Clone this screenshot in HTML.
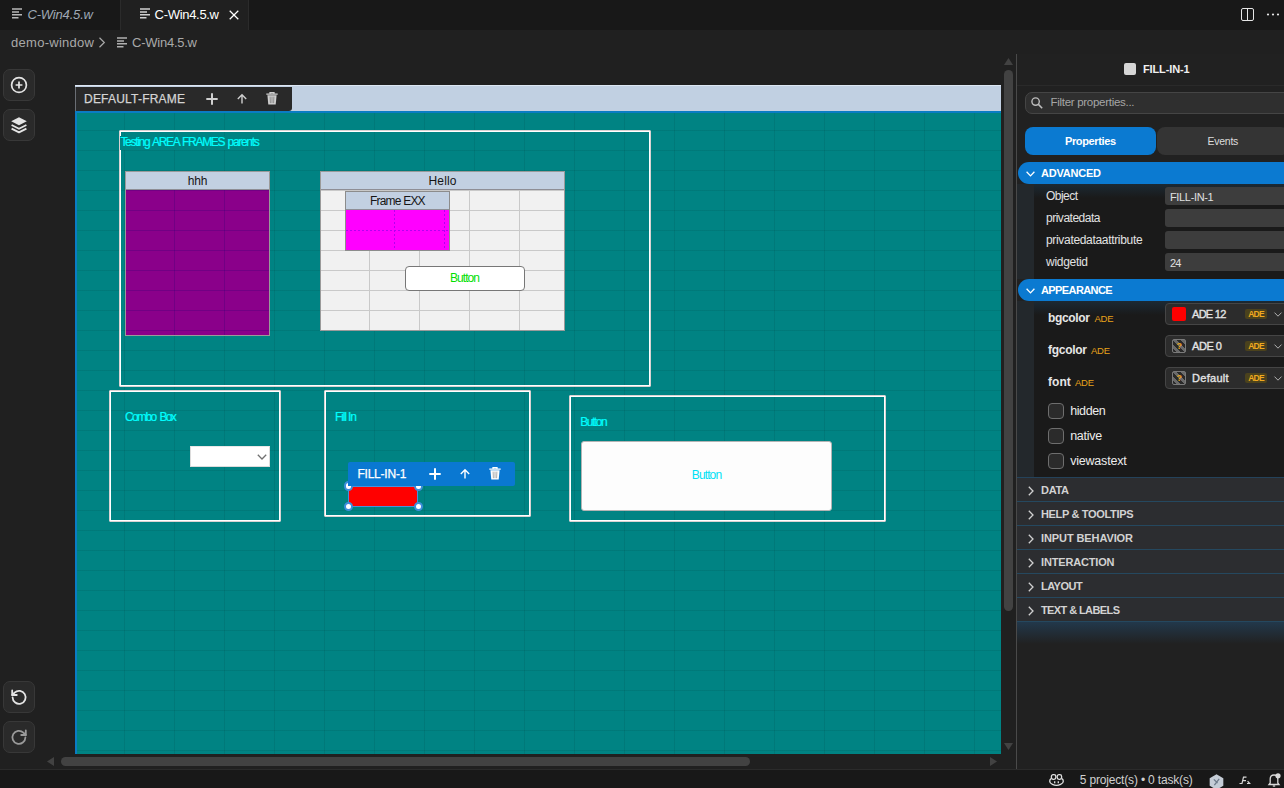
<!DOCTYPE html>
<html lang="en">
<head>
<meta charset="utf-8">
<title>C-Win4.5.w</title>
<style>
*{box-sizing:border-box;margin:0;padding:0}
html,body{width:1284px;height:788px;overflow:hidden;background:#202020;font-family:"Liberation Sans",sans-serif;color:#ccc;font-size:13px}
body{position:relative}
.a{position:absolute}
.t{position:absolute;white-space:nowrap;line-height:1}
svg{position:absolute;overflow:visible}
#tabbar{left:0;top:0;width:1284px;height:30px;background:#181818}
#tab2{left:121px;top:0;width:127px;height:30px;background:#202020}
#status{left:0;top:769px;width:1284px;height:19px;background:#181818;border-top:1px solid #2b2b2b}
.tbtn{left:3px;width:32px;height:32px;border-radius:7px;background:#2a2a2a;border:1px solid #383838}
#canvas{left:75px;top:85px;width:926px;height:669px;background:#c1d0e2;border-top:1px solid #dde7f3;overflow:hidden}
#teal{left:0;top:25px;width:926px;height:644px;background-color:#008383;border-top:1px solid #0b70bd;border-left:1px solid #0b70bd}
.grid{background-image:linear-gradient(to right,var(--g) 1px,transparent 1px),linear-gradient(to bottom,var(--g) 1px,transparent 1px);background-size:50px 20px}
.box{border:1px solid #d9d2d2;box-shadow:inset 0 0 0 1px #ffffff;border-radius:1px}
.lab{height:23px;background:#292929;border-radius:0 0 3px 0}
.wt{font-size:12px;color:#00ffff;-webkit-text-stroke:0.2px #00ffff}
.frm{border:1px solid #9a9a9a}
.ttl{left:0;top:0;right:0;height:18px;background:#c2d0e2;border-bottom:1px solid #8e8e96}
.dk{color:#151515;font-size:12px}
#vsb{left:1001px;top:55px;width:16px;height:714px}
#panel{left:1016px;top:54px;width:268px;height:715px;background:#212121;border-left:1px solid #4a4a4a}
.sec{left:2px;width:270px;height:22px;background:#0b7ad1;border-radius:11px 0 0 11px}
.csec{left:1px;width:270px;height:25px;background:#2c2d30;border-bottom:1px solid #25485f}
.cont{left:18px;width:250px;background:#1a1a1a}
.strip{left:1px;width:17px;background:#23282c}
.pin{left:149px;width:130px;height:18px;background:#3d3d3d;border-radius:3px}
.sel{left:149px;width:130px;height:22px;background:#2c2c2c;border:1px solid #454545;border-radius:4px}
.cb{left:32px;width:16px;height:16px;border:1px solid #6e6e6e;border-radius:4px;background:#2b2b2b}
.b{font-weight:bold}
.badge{width:22px;height:10px;background:#4b421d;border-radius:2px}
.sw{width:14px;height:14px;border-radius:2px}
.swq{border:1px solid #7a7a7a;background:repeating-linear-gradient(45deg,#2a2a2a 0 2.8px,#6a6a6a 2.8px 5.6px)}
</style>
</head>
<body>
<div class="a" id="tabbar"></div>
<div class="a" id="tab2"></div>
<div class="a" style="left:120px;top:0;width:1px;height:30px;background:#2b2b2b"></div>
<div class="a" style="left:248px;top:0;width:1px;height:30px;background:#2b2b2b"></div>
<svg style="left:12px;top:8px" width="11" height="11" viewBox="0 0 11 11"><path d="M0 1h10M0 3.9h7M0 6.8h10M0 9.7h6.5" stroke="#b8b8b8" stroke-width="1.5" fill="none"/></svg>
<span id="tab1" class="t " style="left:27.5px;top:8px;letter-spacing:-0.175px;font-size:13px;font-style:italic;color:#9fa8b5">C-Win4.5.w</span>
<svg style="left:140px;top:8px" width="11" height="11" viewBox="0 0 11 11"><path d="M0 1h10M0 3.9h7M0 6.8h10M0 9.7h6.5" stroke="#d0d0d0" stroke-width="1.5" fill="none"/></svg>
<span id="tab2t" class="t " style="left:154.6px;top:8px;letter-spacing:-0.309px;font-size:13px;color:#ffffff">C-Win4.5.w</span>
<svg style="left:229px;top:9.5px" width="10" height="10" viewBox="0 0 10 10"><path d="M0.7 0.7L9.3 9.3M9.3 0.7L0.7 9.3" stroke="#fff" stroke-width="1.25" fill="none"/></svg>
<svg style="left:1241px;top:8px" width="13" height="13" viewBox="0 0 13 13"><rect x="0.5" y="0.5" width="12" height="12" rx="1.5" fill="none" stroke="#e6e6e6" stroke-width="1"/><path d="M6.5 0.5V12.5" stroke="#e6e6e6" stroke-width="1"/></svg>
<svg style="left:1266px;top:13px" width="14" height="3" viewBox="0 0 14 3"><circle cx="2" cy="1.5" r="1.1" fill="#e6e6e6"/><circle cx="7" cy="1.5" r="1.1" fill="#e6e6e6"/><circle cx="12" cy="1.5" r="1.1" fill="#e6e6e6"/></svg>
<span id="cr1" class="t " style="left:11px;top:36px;letter-spacing:0.279px;font-size:13px;color:#a9a9a9">demo-window</span>
<svg style="left:98px;top:37px" width="8" height="11" viewBox="0 0 8 11"><path d="M1.5 0.8L6.3 5.5L1.5 10.2" stroke="#a9a9a9" stroke-width="1.2" fill="none"/></svg>
<svg style="left:117px;top:37px" width="11" height="11" viewBox="0 0 11 11"><path d="M0 1h10M0 3.9h7M0 6.8h10M0 9.7h6.5" stroke="#b0b0b0" stroke-width="1.5" fill="none"/></svg>
<span id="cr2" class="t " style="left:132px;top:36px;letter-spacing:-0.242px;font-size:13px;color:#a9a9a9">C-Win4.5.w</span>
<div class="a tbtn" style="top:69px"></div>
<div class="a tbtn" style="top:109px"></div>
<div class="a tbtn" style="top:681px"></div>
<div class="a tbtn" style="top:721px"></div>
<svg style="left:10px;top:76px" width="18" height="18" viewBox="0 0 18 18"><circle cx="9" cy="9" r="7.4" fill="none" stroke="#e4e4e4" stroke-width="1.7"/><path d="M9 5.6V12.4M5.6 9H12.4" stroke="#e4e4e4" stroke-width="1.7"/></svg>
<svg style="left:10px;top:116px" width="18" height="18" viewBox="0 0 18 18"><path d="M9 1.2L16.8 5.2L9 9.2L1.2 5.2Z" fill="#e4e4e4"/><path d="M1.6 9L9 12.8L16.4 9M1.6 12.6L9 16.4L16.4 12.6" fill="none" stroke="#e4e4e4" stroke-width="1.8" stroke-linejoin="round"/></svg>
<svg style="left:10px;top:688px" width="18" height="18" viewBox="0 0 18 18"><path d="M2.6 9.4A6.5 6.5 0 1 0 4.6 4.6L2.2 7" fill="none" stroke="#e4e4e4" stroke-width="1.8" stroke-linecap="round"/><path d="M2.2 2.4V7H6.8" fill="none" stroke="#e4e4e4" stroke-width="1.8" stroke-linecap="round" stroke-linejoin="round"/></svg>
<svg style="left:10px;top:728px" width="18" height="18" viewBox="0 0 18 18"><path d="M15.4 9.4A6.5 6.5 0 1 1 13.4 4.6L15.8 7" fill="none" stroke="#9a9a9a" stroke-width="1.8" stroke-linecap="round"/><path d="M15.8 2.4V7H11.2" fill="none" stroke="#9a9a9a" stroke-width="1.8" stroke-linecap="round" stroke-linejoin="round"/></svg>
<div class="a" id="canvas"></div>
<div class="a" style="left:75px;top:111px;width:926px;height:643px;background:#008383"></div>
<div class="a grid" style="left:75px;top:111px;width:926px;height:643px;--g:rgba(0,40,40,.11);background-position:49px 19px"></div>
<div class="a" style="left:75px;top:111px;width:926px;height:2px;background:#0a7cc4"></div>
<div class="a" style="left:75px;top:111px;width:2px;height:643px;background:#0a7cc4"></div>
<div class="a" style="left:75px;top:87px;width:1px;height:24px;background:#6a6e74"></div>
<div class="a lab" style="left:76px;top:87px;width:216px;height:24px"></div>
<span id="dfl" class="t " style="left:84px;top:92.8px;letter-spacing:0.212px;font-size:12px;color:#d4d4d4;-webkit-text-stroke:0.25px #d4d4d4">DEFAULT-FRAME</span>
<svg style="left:206px;top:93px" width="12" height="12" viewBox="0 0 12 12"><path d="M6 0.3V11.7M0.3 6H11.7" stroke="#cfcfcf" stroke-width="2" fill="none"/></svg><svg style="left:237px;top:94px" width="10" height="10" viewBox="0 0 10 10"><path d="M5 9.6V1M0.8 5L5 0.8L9.2 5" stroke="#cfcfcf" stroke-width="1.4" fill="none"/></svg><svg style="left:265.6px;top:92px" width="12" height="13" viewBox="0 0 12 13"><path d="M0.3 2.2H11.7M4 2V0.6H8V2" stroke="#cfcfcf" stroke-width="1.3" fill="none"/><path d="M1.4 3.2H10.6L9.7 12.6H2.3Z" fill="#cfcfcf"/><path d="M4.1 4.6L4.4 11.2M6 4.6V11.2M7.9 4.6L7.6 11.2" stroke="#00000066" stroke-width="0.8" fill="none"/></svg>
<div class="a box" style="left:119px;top:130px;width:532px;height:257px"></div>
<div class="a" style="left:120px;top:136px;width:141px;height:14px;background:#008383"></div>
<span id="tst" class="t wt" style="left:120.4px;top:135.7px;letter-spacing:-1.300px;word-spacing:1.261px;">Testing AREA FRAMES parents</span>
<div class="a frm" style="left:125px;top:171px;width:145px;height:165px;background:#8a008a"><div class="a ttl"></div><div class="a grid" style="left:0;top:18px;right:0;bottom:0;--g:rgba(20,0,110,.2);background-position:48px 20px"></div></div>
<span id="hhh" class="t dk" style="left:187.75px;top:174.8px;letter-spacing:-0.141px;">hhh</span>
<div class="a frm" style="left:320px;top:171px;width:245px;height:160px;background:#f1f1f1"><div class="a ttl"></div><div class="a grid" style="left:0;top:18px;right:0;bottom:0;--g:#c9c9c9;background-position:48px 20px"></div></div>
<span id="hello" class="t dk" style="left:428.5px;top:174.8px;letter-spacing:0.161px;">Hello</span>
<div class="a frm" style="left:345px;top:191px;width:105px;height:60px;background:#ff00ff;border-color:#8c8c8c"><div class="a ttl"></div><div class="a" style="left:48px;top:18px;width:1px;bottom:0;background:repeating-linear-gradient(to bottom,#b400f0 0 2px,transparent 2px 4px)"></div><div class="a" style="left:98px;top:18px;width:1px;bottom:0;background:repeating-linear-gradient(to bottom,#b400f0 0 2px,transparent 2px 4px)"></div><div class="a" style="left:0;top:38px;right:0;height:1px;background:repeating-linear-gradient(to right,#b400f0 0 2px,transparent 2px 4px)"></div></div>
<span id="fexx" class="t dk" style="left:370px;top:194.6px;letter-spacing:-0.804px;">Frame EXX</span>
<div class="a" style="left:405px;top:266px;width:120px;height:25px;background:#fff;border:1px solid #777;border-radius:4px"></div>
<span id="btng" class="t " style="left:450px;top:271.8px;letter-spacing:-0.942px;font-size:12px;color:#00e000">Button</span>
<div class="a box" style="left:109px;top:390px;width:172px;height:132px"></div>
<span id="cmb" class="t wt" style="left:125px;top:411.3px;letter-spacing:-1.650px;word-spacing:2.297px;">Combo Box</span>
<div class="a" style="left:190px;top:446px;width:80px;height:21px;background:#fff;border:1px solid #dcdcdc;border-top-color:#e8e8e8"></div>
<svg style="left:257px;top:454px" width="10" height="6" viewBox="0 0 10 6"><path d="M0.8 0.8L5 5L9.2 0.8" stroke="#707070" stroke-width="1.3" fill="none"/></svg>
<div class="a box" style="left:324px;top:390px;width:207px;height:127px"></div>
<span id="fil" class="t wt" style="left:335px;top:411.3px;letter-spacing:-1.112px;">Fill In</span>
<div class="a" style="left:348px;top:486px;width:70px;height:21px;border:1px solid #4a90d9;border-radius:3px"></div>
<div class="a" style="left:349px;top:487px;width:68px;height:19px;background:#ff0000;border-radius:3px"></div>
<div class="a" style="left:343.5px;top:481.3px;width:9.4px;height:9.4px;border-radius:50%;background:#fff;border:2px solid #3d8edb"></div>
<div class="a" style="left:413.5px;top:481.3px;width:9.4px;height:9.4px;border-radius:50%;background:#fff;border:2px solid #3d8edb"></div>
<div class="a" style="left:343.5px;top:502.1px;width:9.4px;height:9.4px;border-radius:50%;background:#fff;border:2px solid #3d8edb"></div>
<div class="a" style="left:413.5px;top:502.1px;width:9.4px;height:9.4px;border-radius:50%;background:#fff;border:2px solid #3d8edb"></div>
<div class="a" style="left:348px;top:462px;width:167px;height:24px;background:#0a78d2;border-radius:2px 2px 2px 0"></div>
<span id="fi1" class="t " style="left:357.4px;top:467.8px;letter-spacing:-0.210px;font-size:12px;color:#ffffff;-webkit-text-stroke:0.25px #ffffff">FILL-IN-1</span>
<svg style="left:429px;top:468px" width="12" height="12" viewBox="0 0 12 12"><path d="M6 0.3V11.7M0.3 6H11.7" stroke="#ffffff" stroke-width="2" fill="none"/></svg><svg style="left:460px;top:469px" width="10" height="10" viewBox="0 0 10 10"><path d="M5 9.6V1M0.8 5L5 0.8L9.2 5" stroke="#ffffff" stroke-width="1.4" fill="none"/></svg><svg style="left:488.6px;top:467px" width="12" height="13" viewBox="0 0 12 13"><path d="M0.3 2.2H11.7M4 2V0.6H8V2" stroke="#ffffff" stroke-width="1.3" fill="none"/><path d="M1.4 3.2H10.6L9.7 12.6H2.3Z" fill="#ffffff"/><path d="M4.1 4.6L4.4 11.2M6 4.6V11.2M7.9 4.6L7.6 11.2" stroke="#00000066" stroke-width="0.8" fill="none"/></svg>
<div class="a box" style="left:569px;top:395px;width:317px;height:127px"></div>
<span id="btl" class="t wt" style="left:580.2px;top:416.3px;letter-spacing:-1.442px;">Button</span>
<div class="a" style="left:581px;top:441px;width:251px;height:70px;background:#fdfdfd;border:1px solid #b4b4b4;border-radius:3px"></div>
<span id="btc" class="t " style="left:691.8px;top:468.6px;letter-spacing:-0.880px;font-size:12px;color:#00e1f5">Button</span>
<svg style="left:1004px;top:58px" width="9" height="7" viewBox="0 0 9 7"><path d="M4.5 0L9 7H0Z" fill="#424242"/></svg>
<div class="a" style="left:1004px;top:70px;width:9px;height:541px;border-radius:4.5px;background:#424242"></div>
<svg style="left:1004px;top:743px" width="9" height="7" viewBox="0 0 9 7"><path d="M0 0H9L4.5 7Z" fill="#424242"/></svg>
<svg style="left:47px;top:757px" width="7" height="9" viewBox="0 0 7 9"><path d="M7 0V9L0 4.5Z" fill="#424242"/></svg>
<div class="a" style="left:61px;top:757px;width:689px;height:9px;border-radius:4.5px;background:#424242"></div>
<svg style="left:990px;top:757px" width="7" height="9" viewBox="0 0 7 9"><path d="M0 0V9L7 4.5Z" fill="#424242"/></svg>
<div class="a" id="panel"></div>
<div class="a" style="left:1124px;top:63px;width:12px;height:12px;background:#d6d6d6;border-radius:2px"></div>
<span id="phd" class="t b" style="left:1143px;top:63.7px;letter-spacing:-0.132px;font-size:11px;color:#f0f0f0">FILL-IN-1</span>
<div class="a" style="left:1017px;top:85px;width:267px;height:1px;background:#2a2a2a"></div>
<div class="a" style="left:1025px;top:92px;width:270px;height:22px;background:#2f2f2f;border:1px solid #454545;border-radius:7px"></div>
<svg style="left:1031px;top:97px" width="12" height="12" viewBox="0 0 12 12"><circle cx="4.6" cy="4.6" r="3.7" fill="none" stroke="#bdbdbd" stroke-width="1.4"/><path d="M7.4 7.4L11.2 11.2" stroke="#bdbdbd" stroke-width="1.5"/></svg>
<span id="flt" class="t " style="left:1050.5px;top:97.1px;letter-spacing:-0.289px;font-size:11.5px;color:#a6a6a6">Filter properties...</span>
<div class="a" style="left:1025px;top:127px;width:131px;height:28px;background:#0b7ad1;border-radius:8px"></div>
<span id="tpr" class="t b" style="left:1065px;top:135.7px;letter-spacing:-0.379px;font-size:11px;color:#ffffff">Properties</span>
<div class="a" style="left:1157px;top:127px;width:132px;height:28px;background:#343434;border-radius:8px"></div>
<span id="tev" class="t " style="left:1207.5px;top:135.9px;letter-spacing:-0.263px;font-size:10.5px;color:#dcdcdc">Events</span>
<div class="a strip" style="left:1017px;top:184px;height:95px"></div>
<div class="a cont" style="left:1034px;top:184px;height:95px"></div>
<div class="a" style="left:1034px;top:184px;width:250px;height:14px;background:linear-gradient(to bottom,rgba(30,70,100,.35),rgba(30,70,100,0))"></div>
<div class="a sec" style="left:1018px;top:162px"></div>
<svg style="left:1025.5px;top:170.5px" width="9" height="6" viewBox="0 0 9 6"><path d="M0.6 0.7L4.5 4.9L8.4 0.7" stroke="#ffffff" stroke-width="1.3" fill="none"/></svg>
<span id="adv" class="t b" style="left:1041px;top:167.7px;letter-spacing:-0.219px;font-size:11px;color:#ffffff">ADVANCED</span>
<span id="r1" class="t " style="left:1046px;top:189.8px;letter-spacing:-0.538px;font-size:12px;color:#e2e2e2">Object</span>
<div class="a pin" style="left:1165px;top:187px"></div>
<span id="r2" class="t " style="left:1046px;top:211.8px;letter-spacing:-0.488px;font-size:12px;color:#e2e2e2">privatedata</span>
<div class="a pin" style="left:1165px;top:209px"></div>
<span id="r3" class="t " style="left:1046px;top:233.8px;letter-spacing:-0.323px;font-size:12px;color:#e2e2e2">privatedataattribute</span>
<div class="a pin" style="left:1165px;top:231px"></div>
<span id="r4" class="t " style="left:1046px;top:255.8px;letter-spacing:-0.291px;font-size:12px;color:#e2e2e2">widgetid</span>
<div class="a pin" style="left:1165px;top:253px"></div>
<span id="v1" class="t " style="left:1170px;top:191.7px;letter-spacing:-0.345px;font-size:11px;color:#e0e0e0">FILL-IN-1</span>
<span id="v4" class="t " style="left:1170px;top:257.7px;letter-spacing:-0.750px;font-size:11px;color:#e0e0e0">24</span>
<div class="a strip" style="left:1017px;top:301px;height:176px"></div>
<div class="a cont" style="left:1034px;top:301px;height:176px"></div>
<div class="a" style="left:1034px;top:301px;width:250px;height:14px;background:linear-gradient(to bottom,rgba(30,70,100,.35),rgba(30,70,100,0))"></div>
<div class="a sec" style="left:1018px;top:279px"></div>
<svg style="left:1025.5px;top:287.5px" width="9" height="6" viewBox="0 0 9 6"><path d="M0.6 0.7L4.5 4.9L8.4 0.7" stroke="#ffffff" stroke-width="1.3" fill="none"/></svg>
<span id="app" class="t b" style="left:1041px;top:284.7px;letter-spacing:-0.602px;font-size:11px;color:#ffffff">APPEARANCE</span>
<span id="pl0" class="t b" style="left:1048px;top:311.8px;letter-spacing:-0.334px;font-size:12px;color:#e6e6e6">bgcolor</span>
<span id="pa0" class="t " style="left:1094.5px;top:314px;letter-spacing:-0.274px;font-size:9.5px;color:#e8a21a">ADE</span>
<div class="a sel" style="left:1165px;top:303px"></div>
<div class="a sw" style="left:1172px;top:307px;background:#ff0000"></div>
<span id="pv0" class="t " style="left:1192px;top:308.7px;letter-spacing:-0.704px;font-size:11px;color:#e4e4e4;-webkit-text-stroke:0.35px #e4e4e4">ADE 12</span>
<div class="a badge" style="left:1245px;top:309px"></div>
<span id="pb0" class="t b" style="left:1248.2px;top:310.1px;letter-spacing:-0.775px;font-size:8.5px;color:#f0a91e">ADE</span>
<svg style="left:1274px;top:312px" width="8" height="5" viewBox="0 0 8 5"><path d="M0.5 0.6L4 4.2L7.5 0.6" stroke="#b0b0b0" stroke-width="1" fill="none"/></svg>
<span id="pl1" class="t b" style="left:1048px;top:343.8px;letter-spacing:-0.279px;font-size:12px;color:#e6e6e6">fgcolor</span>
<span id="pa1" class="t " style="left:1091px;top:346px;letter-spacing:-0.274px;font-size:9.5px;color:#e8a21a">ADE</span>
<div class="a sel" style="left:1165px;top:335px"></div>
<div class="a sw swq" style="left:1172px;top:339px"></div>
<span id="q1" class="t b" style="left:1176.5px;top:341.5px;letter-spacing:0.000px;font-size:9px;color:#e8a21a">?</span>
<span id="pv1" class="t " style="left:1192px;top:340.7px;letter-spacing:-0.451px;font-size:11px;color:#e4e4e4;-webkit-text-stroke:0.35px #e4e4e4">ADE 0</span>
<div class="a badge" style="left:1245px;top:341px"></div>
<span id="pb1" class="t b" style="left:1248.2px;top:342.1px;letter-spacing:-0.775px;font-size:8.5px;color:#f0a91e">ADE</span>
<svg style="left:1274px;top:344px" width="8" height="5" viewBox="0 0 8 5"><path d="M0.5 0.6L4 4.2L7.5 0.6" stroke="#b0b0b0" stroke-width="1" fill="none"/></svg>
<span id="pl2" class="t b" style="left:1048px;top:375.8px;letter-spacing:0.032px;font-size:12px;color:#e6e6e6">font</span>
<span id="pa2" class="t " style="left:1075px;top:378px;letter-spacing:-0.274px;font-size:9.5px;color:#e8a21a">ADE</span>
<div class="a sel" style="left:1165px;top:367px"></div>
<div class="a sw swq" style="left:1172px;top:371px"></div>
<span id="q2" class="t b" style="left:1176.5px;top:373.5px;letter-spacing:0.000px;font-size:9px;color:#e8a21a">?</span>
<span id="pv2" class="t " style="left:1192px;top:372.7px;letter-spacing:0.289px;font-size:11px;color:#e4e4e4;-webkit-text-stroke:0.35px #e4e4e4">Default</span>
<div class="a badge" style="left:1245px;top:373px"></div>
<span id="pb2" class="t b" style="left:1248.2px;top:374.1px;letter-spacing:-0.775px;font-size:8.5px;color:#f0a91e">ADE</span>
<svg style="left:1274px;top:376px" width="8" height="5" viewBox="0 0 8 5"><path d="M0.5 0.6L4 4.2L7.5 0.6" stroke="#b0b0b0" stroke-width="1" fill="none"/></svg>
<div class="a cb" style="left:1048px;top:403px"></div>
<span id="ck0" class="t " style="left:1070.2px;top:405.1px;letter-spacing:-0.408px;font-size:12.5px;color:#ececec">hidden</span>
<div class="a cb" style="left:1048px;top:428px"></div>
<span id="ck1" class="t " style="left:1070.2px;top:430.1px;letter-spacing:-0.272px;font-size:12.5px;color:#ececec">native</span>
<div class="a cb" style="left:1048px;top:453px"></div>
<span id="ck2" class="t " style="left:1070.2px;top:455.1px;letter-spacing:-0.206px;font-size:12.5px;color:#ececec">viewastext</span>
<div class="a" style="left:1017px;top:477px;width:267px;height:1px;background:#24425a"></div>
<div class="a csec" style="left:1017px;top:478px;height:24px"></div>
<svg style="left:1027.5px;top:485.5px" width="6" height="10" viewBox="0 0 6 10"><path d="M0.8 0.7L5 5L0.8 9.3" stroke="#d0d0d0" stroke-width="1.3" fill="none"/></svg>
<span id="cs0" class="t b" style="left:1041px;top:484.7px;letter-spacing:-0.306px;font-size:11px;color:#d2d2d2">DATA</span>
<div class="a csec" style="left:1017px;top:502px;height:24px"></div>
<svg style="left:1027.5px;top:509.5px" width="6" height="10" viewBox="0 0 6 10"><path d="M0.8 0.7L5 5L0.8 9.3" stroke="#d0d0d0" stroke-width="1.3" fill="none"/></svg>
<span id="cs1" class="t b" style="left:1041px;top:508.7px;letter-spacing:-0.334px;font-size:11px;color:#d2d2d2">HELP &amp; TOOLTIPS</span>
<div class="a csec" style="left:1017px;top:526px;height:24px"></div>
<svg style="left:1027.5px;top:533.5px" width="6" height="10" viewBox="0 0 6 10"><path d="M0.8 0.7L5 5L0.8 9.3" stroke="#d0d0d0" stroke-width="1.3" fill="none"/></svg>
<span id="cs2" class="t b" style="left:1041px;top:532.7px;letter-spacing:-0.100px;font-size:11px;color:#d2d2d2">INPUT BEHAVIOR</span>
<div class="a csec" style="left:1017px;top:550px;height:24px"></div>
<svg style="left:1027.5px;top:557.5px" width="6" height="10" viewBox="0 0 6 10"><path d="M0.8 0.7L5 5L0.8 9.3" stroke="#d0d0d0" stroke-width="1.3" fill="none"/></svg>
<span id="cs3" class="t b" style="left:1041px;top:556.7px;letter-spacing:-0.167px;font-size:11px;color:#d2d2d2">INTERACTION</span>
<div class="a csec" style="left:1017px;top:574px;height:24px"></div>
<svg style="left:1027.5px;top:581.5px" width="6" height="10" viewBox="0 0 6 10"><path d="M0.8 0.7L5 5L0.8 9.3" stroke="#d0d0d0" stroke-width="1.3" fill="none"/></svg>
<span id="cs4" class="t b" style="left:1041px;top:580.7px;letter-spacing:-0.522px;font-size:11px;color:#d2d2d2">LAYOUT</span>
<div class="a csec" style="left:1017px;top:598px;height:24px"></div>
<svg style="left:1027.5px;top:605.5px" width="6" height="10" viewBox="0 0 6 10"><path d="M0.8 0.7L5 5L0.8 9.3" stroke="#d0d0d0" stroke-width="1.3" fill="none"/></svg>
<span id="cs5" class="t b" style="left:1041px;top:604.7px;letter-spacing:-0.598px;font-size:11px;color:#d2d2d2">TEXT &amp; LABELS</span>
<div class="a" style="left:1017px;top:622px;width:267px;height:22px;background:linear-gradient(to bottom,#22384b,rgba(34,56,75,0))"></div>
<div class="a" id="status"></div>
<span id="stt" class="t " style="left:1079.75px;top:774.1px;letter-spacing:-0.170px;font-size:12px;color:#d0d0d0">5 project(s) • 0 task(s)</span>
<svg style="left:1049px;top:774px" width="15" height="12" viewBox="0 0 15 12"><rect x="2.4" y="0.7" width="4.4" height="4.6" rx="1.8" fill="none" stroke="#e0e0e0" stroke-width="1.3"/><rect x="8.2" y="0.7" width="4.4" height="4.6" rx="1.8" fill="none" stroke="#e0e0e0" stroke-width="1.3"/><path d="M2.2 4.6Q0.7 5.4 0.7 7.2Q0.7 9.2 3.4 10.4Q5.400 11.300 7.500 11.300Q9.600 11.300 11.600 10.400Q14.300 9.200 14.300 7.200Q14.300 5.400 12.800 4.600" fill="none" stroke="#e0e0e0" stroke-width="1.3"/><path d="M5.700 7.200V9.300M9.300 7.200V9.300" stroke="#e0e0e0" stroke-width="1.3"/></svg>
<svg style="left:1209px;top:774px" width="15" height="16" viewBox="0 0 14 15"><path d="M7 0.3L13.4 3.9V11.1L7 14.7L0.6 11.100V3.900Z" fill="#c4ccd6"/><path d="M4.5 5L8 8.5M9.500 4.600L5 10.500" stroke="#6d7a8a" stroke-width="1.2" fill="none"/></svg>
<svg style="left:1239px;top:776px" width="12" height="9" viewBox="0 0 12 9"><path d="M0.500 7.500H3L4.500 1.200H7.500M3.500 4.600H7M8 7.500H11.500M8.600 5.200L10.600 7.500" stroke="#d8d8d8" stroke-width="1.2" fill="none"/></svg>
<svg style="left:1268px;top:773px" width="13" height="14" viewBox="0 0 13 14"><path d="M2.200 10V6Q2.200 2 6 2Q9.800 2 9.800 6V10L11 11.500H1Z" fill="none" stroke="#d8d8d8" stroke-width="1.3"/><path d="M4.800 13H7.200" stroke="#d8d8d8" stroke-width="1.3"/><circle cx="10" cy="2.800" r="2.600" fill="#d8d8d8"/></svg>
</body>
</html>
